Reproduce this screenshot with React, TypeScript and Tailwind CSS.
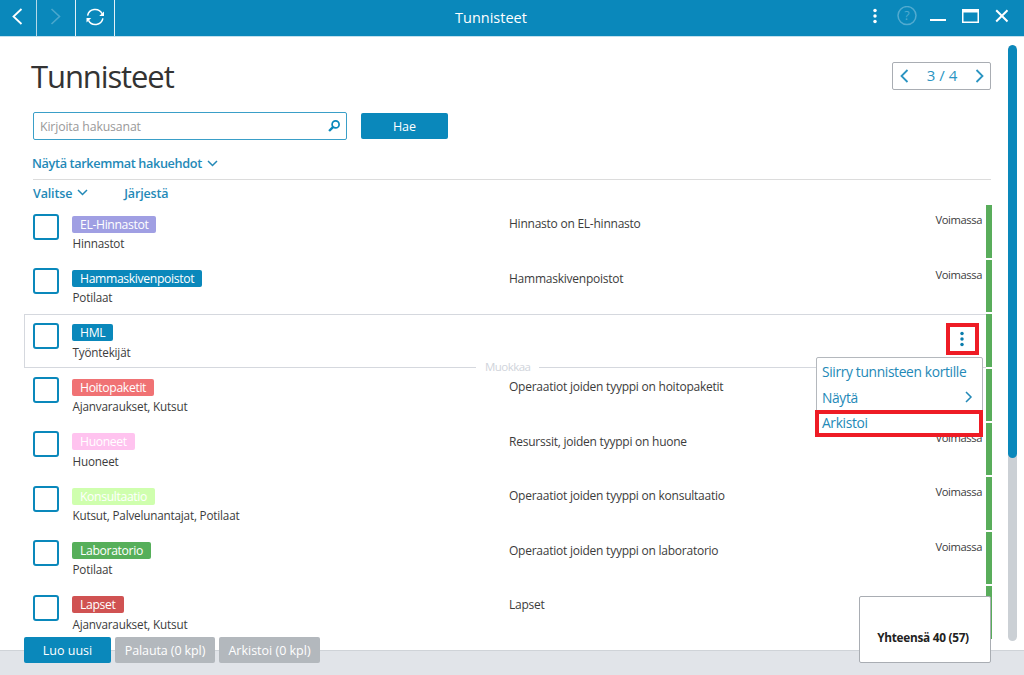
import React from "react";
import clsx from "clsx";

interface Tag {
    name: string;
    color: string;
    targets: string;
    description?: string;
    status?: string;
    selected?: boolean;
}

const tags: Tag[] = [
    { name: "EL-Hinnastot", color: "bg-[#a09fe3]", targets: "Hinnastot", description: "Hinnasto on EL-hinnasto", status: "Voimassa" },
    { name: "Hammaskivenpoistot", color: "bg-[#0a88bb]", targets: "Potilaat", description: "Hammaskivenpoistot", status: "Voimassa" },
    { name: "HML", color: "bg-[#0a88bb]", targets: "Työntekijät", selected: true },
    { name: "Hoitopaketit", color: "bg-[#f07274]", targets: "Ajanvaraukset, Kutsut", description: "Operaatiot joiden tyyppi on hoitopaketit" },
    { name: "Huoneet", color: "bg-[#ffc3ef]", targets: "Huoneet", description: "Resurssit, joiden tyyppi on huone", status: "Voimassa" },
    { name: "Konsultaatio", color: "bg-[#cfffae]", targets: "Kutsut, Palvelunantajat, Potilaat", description: "Operaatiot joiden tyyppi on konsultaatio", status: "Voimassa" },
    { name: "Laboratorio", color: "bg-[#56af5a]", targets: "Potilaat", description: "Operaatiot joiden tyyppi on laboratorio", status: "Voimassa" },
    { name: "Lapset", color: "bg-[#d05252]", targets: "Ajanvaraukset, Kutsut", description: "Lapset" },
];

interface ChevronProps {
    points: string;
    width: number;
    height: number;
    strokeWidth?: number;
    className?: string;
}

const Chevron: React.FC<ChevronProps> = ({ points, width, height, strokeWidth = 1.5, className }) => (
    <svg width={width} height={height} fill="none" stroke="currentColor" strokeWidth={strokeWidth} className={className}>
        <polyline points={points} />
    </svg>
);

const Dots = ({ className }: { className?: string }) => (
    <svg width="4" height="16" fill="currentColor" className={className}>
        <circle cx="2" cy="2.5" r="1.75" />
        <circle cx="2" cy="8" r="1.75" />
        <circle cx="2" cy="13.5" r="1.75" />
    </svg>
);

const TitleBar = () => (
    <header className="flex h-[37px] shrink-0 border-b border-[#c3e1ee] bg-[#0a88bb] text-white">
        <div className="flex h-9 w-[37px] items-center border-r border-[#b5d9e8] pb-[3px] pl-3">
            <Chevron points="9.5,1 1.5,8.5 9.5,16" width={11} height={17} strokeWidth={1.8} />
        </div>
        <div className="flex h-9 w-[39px] items-center border-r border-[#e3f1f7] pb-[3px] pl-[13px] text-[#4aa7cd]">
            <Chevron points="1.5,1 9.5,8.5 1.5,16" width={11} height={17} strokeWidth={1.6} />
        </div>
        <div className="flex h-9 w-[39px] items-center border-r border-[#e3f1f7] pb-[3px] pl-2.5">
            <svg width="19" height="18" fill="none" stroke="currentColor" strokeWidth="1.5">
                <path d="M1.6 7.6 A7.7 7.6 0 0 1 16 5.6" />
                <path d="M16.9 10.4 A7.7 7.6 0 0 1 2.5 12.4" />
                <path d="M18 3.6 V8 H13.2 Z" fill="currentColor" stroke="none" />
                <path d="M.5 14.4 V10 H5.3 Z" fill="currentColor" stroke="none" />
            </svg>
        </div>
        <div className="flex h-[35px] flex-1 items-center pl-[340px] text-[14.5px]">Tunnisteet</div>
        <div className="flex h-8 items-center">
            <Dots className="mr-5" />
            <svg width="20" height="20" fill="none" stroke="#52abd0" className="mr-[13px]">
                <circle cx="10" cy="9.6" r="9" strokeWidth="1.5" />
                <text x="10" y="14" textAnchor="middle" fontSize="12.5" fill="#52abd0" stroke="none">?</text>
            </svg>
            <div className="mt-2 mr-4 h-0.5 w-4 bg-white" />
            <svg width="17" height="14" fill="none" stroke="currentColor" className="mr-4">
                <path d="M.75 1 V13.25 H16.25 V1" strokeWidth="1.5" />
                <path d="M0 1.75 H17" strokeWidth="3.5" />
            </svg>
            <svg width="14" height="14" stroke="currentColor" strokeWidth="2" className="mr-[15px]">
                <path d="M1.2 1.2 12.5 12.5 M12.5 1.2 1.2 12.5" />
            </svg>
        </div>
    </header>
);

const SearchSection = () => (
    <section className="ml-[33px] w-[958px]">
        <div className="flex h-[75px] items-start justify-between">
            <h1 className="mt-[17px] -ml-[2px] text-[31px] leading-[44px] tracking-[-1.1px] text-[#333]">Tunnisteet</h1>
            <div className="mt-[25px] flex h-7 w-[99px] items-center rounded-xs border border-[#a9adb3] text-[#2a94c2]">
                <Chevron points="7.5,1 1.5,7 7.5,13" width={9} height={14} strokeWidth={1.8} className="mb-px ml-[7px]" />
                <span className="flex-1 pb-px text-center text-[15px]">3 / 4</span>
                <Chevron points="1.5,1 7.5,7 1.5,13" width={9} height={14} strokeWidth={1.8} className="mr-1.5 mb-px" />
            </div>
        </div>
        <div className="flex gap-[14px]">
            <div className="flex h-7 w-[314px] items-center justify-between rounded-xs border border-[#3a9fc8] pr-1.5 pl-1.5 text-[12.3px] tracking-[-0.15px] text-[#999]">
                <span className="pt-0.5">Kirjoita hakusanat</span>
                <svg width="12" height="12" fill="none" stroke="#0a88bb">
                    <circle cx="7.6" cy="4.4" r="3.5" strokeWidth="1.7" />
                    <path d="M5 7.2 1.1 11" strokeWidth="2.4" />
                </svg>
            </div>
            <button className="mt-px h-[26px] w-[87px] rounded-xs bg-[#0a88bb] pt-0.5 text-[12.5px] text-white">Hae</button>
        </div>
        <div className="flex h-10 items-center border-b border-[#dcdcdc] pt-2 text-[12.7px] font-semibold tracking-[-0.36px] text-[#2389b7]">
            <span className="-ml-px">Näytä tarkemmat hakuehdot</span>
            <Chevron points="1,1 5.5,5.5 10,1" width={11} height={7} className="mb-px ml-[5px]" />
        </div>
        <div className="flex h-[25px] items-center pt-[3px] text-[12.5px] font-semibold tracking-[-0.15px] text-[#2389b7]">
            <span>Valitse</span>
            <Chevron points="1,1 5.5,5.5 10,1" width={11} height={7} className="mb-[3px] ml-[5px]" />
            <span className="ml-9">Järjestä</span>
        </div>
    </section>
);

const ContextMenu = () => (
    <div className="absolute top-[43px] right-[9px] z-10 h-[80px] w-[167px] rounded-xs border border-[#b4b8bd] bg-white text-[13.8px] tracking-[-0.35px] text-[#2389b7]">
        <div className="flex h-[26px] items-center pt-0.5 pl-[5px]">Siirry tunnisteen kortille</div>
        <div className="flex h-[26px] items-center justify-between pt-0.5 pr-[9px] pl-[5px]">
            Näytä
            <Chevron points="1,1 6,6 1,11" width={8} height={12} className="mb-0.5" />
        </div>
        <div className="-ml-[2px] flex h-[27px] w-[168px] items-center border-4 border-[#ee1c25] pl-[3px]">Arkistoi</div>
    </div>
);

const TagRow = ({ tag }: { tag: Tag }) => (
    <div className="relative ml-6 flex h-[54.4px] w-[968px] shrink-0">
        <div
            className={clsx(
                "flex h-[54px] w-[962px] border border-r-0",
                tag.selected ? "border-[#d5d8de]" : "border-transparent",
            )}
        >
            <div className="mt-[7.4px] ml-2 h-[26px] w-[26px] rounded-[3px] border-2 border-[#0a88bb]" />
            <div className="ml-[13px] flex w-[437px] flex-col items-start">
                <span className={clsx("mt-[9.3px] h-[17px] rounded-xs px-2 text-[12.2px] leading-[17px] tracking-[-0.35px] text-white", tag.color)}>
                    {tag.name}
                </span>
                <span className="mt-[2.4px] ml-[0.5px] text-[11.7px] leading-4 tracking-[-0.18px] text-[#3c3c3c]">{tag.targets}</span>
            </div>
            <span className="mt-[9.9px] flex-1 text-[12px] leading-4 tracking-[-0.24px] text-[#3c3c3c]">{tag.description}</span>
            {tag.status && (
                <span className="mt-[6px] mr-1 text-[11.2px] leading-4 tracking-[-0.4px] text-[#3c3c3c]">{tag.status}</span>
            )}
        </div>
        <div className="h-[52.4px] w-1.5 bg-[#59ad5b]" />
        {tag.selected && (
            <>
                <span className="absolute top-[45px] left-[452px] bg-white px-[9px] text-[11.5px] leading-4 tracking-[-0.55px] text-[#d0d4db]">Muokkaa</span>
                <div className="absolute top-[9px] left-[922px] flex h-8 w-[33px] items-center justify-center border-4 border-[#ee1c25] pr-px text-[#0a7cac]">
                    <Dots />
                </div>
                <ContextMenu />
            </>
        )}
    </div>
);

const Footer = () => (
    <footer className="relative flex h-[25px] shrink-0 items-end border-t border-[#cfd3d8] bg-[#e1e4e9] pb-3 pl-6 text-[12.5px] text-white">
        <div className="flex gap-1">
            <button className="h-[26px] w-[87px] rounded-xs bg-[#0a88bb] pt-0.5">Luo uusi</button>
            <button className="h-[26px] w-[100px] rounded-xs bg-[#b3b8bd] pt-0.5 tracking-[-0.1px]">Palauta (0 kpl)</button>
            <button className="h-[26px] w-[101px] rounded-xs bg-[#b3b8bd] pt-0.5">Arkistoi (0 kpl)</button>
        </div>
        <div className="mr-[33px] ml-auto flex h-[67px] w-[132px] justify-center rounded-xs border border-[#a9adb3] bg-white pt-8 pr-1 text-[11.8px] leading-4 font-bold tracking-[-0.27px] text-[#222]">
            Yhteensä 40 (57)
        </div>
    </footer>
);

export default function App() {
    return (
        <div className="flex h-[675px] w-[1024px] flex-col overflow-hidden bg-white font-['Open_Sans',sans-serif]">
            <TitleBar />
            <main className="flex h-[613px] shrink-0">
                <div className="flex h-[613px] w-[1008px] flex-col overflow-hidden">
                    <SearchSection />
                    <div className="flex flex-col pt-[0.4px]">
                        {tags.map((tag) => (
                            <TagRow key={tag.name} tag={tag} />
                        ))}
                    </div>
                </div>
                {/* Scrollbar */}
                <div className="mt-2 h-[596px] w-[9px] overflow-hidden rounded-full bg-[#cbd0d5]">
                    <div className="h-[413px] rounded-full bg-[#0a88bb]" />
                </div>
            </main>
            <Footer />
        </div>
    );
}
